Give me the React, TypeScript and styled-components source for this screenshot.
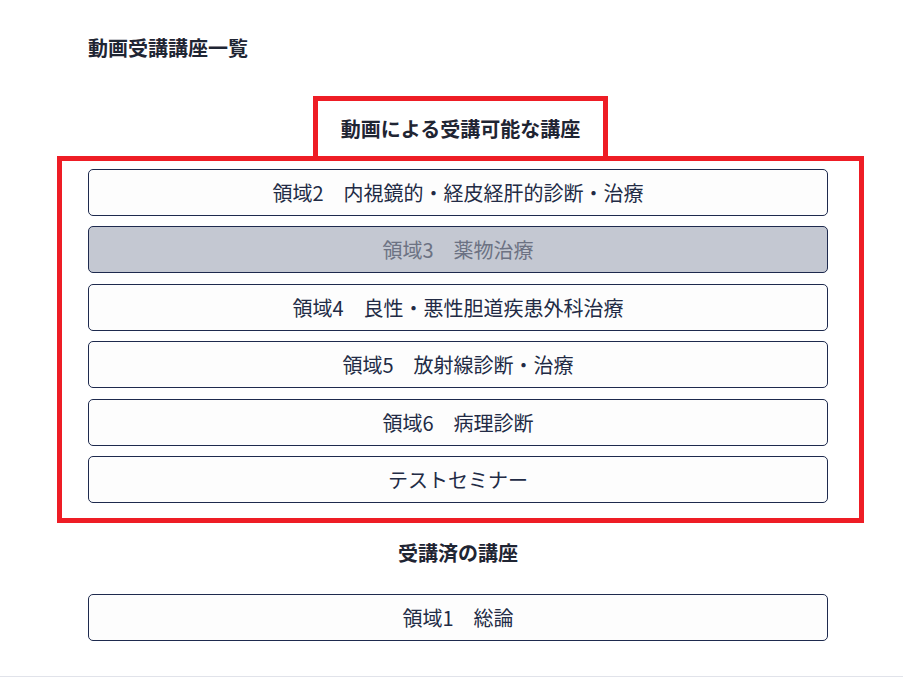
import React from 'react';
import styled, { createGlobalStyle } from 'styled-components';

// A course entry in one of the lists
interface Course {
    id: string,
    label: string,
    disabled?: boolean
}

const availableCourses: Course[] = [
    { id: 'area2', label: '領域2　内視鏡的・経皮経肝的診断・治療' },
    { id: 'area3', label: '領域3　薬物治療', disabled: true },
    { id: 'area4', label: '領域4　良性・悪性胆道疾患外科治療' },
    { id: 'area5', label: '領域5　放射線診断・治療' },
    { id: 'area6', label: '領域6　病理診断' },
    { id: 'test', label: 'テストセミナー' },
];

const finishedCourses: Course[] = [
    { id: 'area1', label: '領域1　総論' },
];

const GlobalStyle = createGlobalStyle`
    body {
        margin: 0;
        background: #ffffff;
        font-family: "Noto Sans CJK JP", "Noto Sans", sans-serif;
        color: #1f2533;
    }
`

const Main = styled.main`
    padding: 33px 75px 0 88px;
`

const PageTitle = styled.h1`
    margin: 0;
    font-size: 20px;
    line-height: 30px;
    font-weight: 700;
    color: #1f2533;
`

const Section = styled.section`
    margin: 33px -36px 0 -31px;
    display: flex;
    flex-direction: column;
    align-items: center;
`

const Tab = styled.h2`
    margin: 0;
    box-sizing: border-box;
    width: 295px;
    height: 60px;
    border: 5px solid #ee1d25;
    border-bottom: none;
    text-align: center;
    font-size: 20px;
    line-height: 55px;
    font-weight: 700;
    color: #1f2533;
`

const HighlightBox = styled.div`
    box-sizing: border-box;
    width: 100%;
    border: 5px solid #ee1d25;
    padding: 8px 31px 15px 26px;
    display: flex;
    flex-direction: column;
    gap: 10.4px;
`

const SubTitle = styled.h2`
    margin: 15px 0 0;
    text-align: center;
    font-size: 20px;
    line-height: 30px;
    font-weight: 700;
    color: #1f2533;
`

const FinishedList = styled.div`
    margin-top: 26px;
    display: flex;
    flex-direction: column;
`

const CourseButton = styled.button<{ $disabled?: boolean }>`
    display: block;
    box-sizing: border-box;
    width: 100%;
    height: 47px;
    padding: 0 12px;
    border: 1px solid #1e2a4e;
    border-radius: 5px;
    background: ${props => props.$disabled ? '#c4c8d2' : '#fdfdfd'};
    color: ${props => props.$disabled ? '#6c7283' : '#222b45'};
    font-family: "Noto Sans CJK JP", "Noto Sans", sans-serif;
    font-size: 20px;
    font-weight: 400;
    text-align: center;
    cursor: ${props => props.$disabled ? 'default' : 'pointer'};
`

const Footer = styled.footer`
    margin-top: 35px;
    height: 7px;
    border-top: 1px solid #e1e3ea;
`

const App: React.FC = () => {
    return (
        <>
            <GlobalStyle />
            <Main>
                <PageTitle>動画受講講座一覧</PageTitle>
                <Section>
                    <Tab>動画による受講可能な講座</Tab>
                    <HighlightBox>
                        {availableCourses.map(course => (
                            <CourseButton key={course.id} $disabled={course.disabled}>
                                {course.label}
                            </CourseButton>
                        ))}
                    </HighlightBox>
                </Section>
                <SubTitle>受講済の講座</SubTitle>
                <FinishedList>
                    {finishedCourses.map(course => (
                        <CourseButton key={course.id}>{course.label}</CourseButton>
                    ))}
                </FinishedList>
            </Main>
            <Footer />
        </>
    )
}

export default App;
